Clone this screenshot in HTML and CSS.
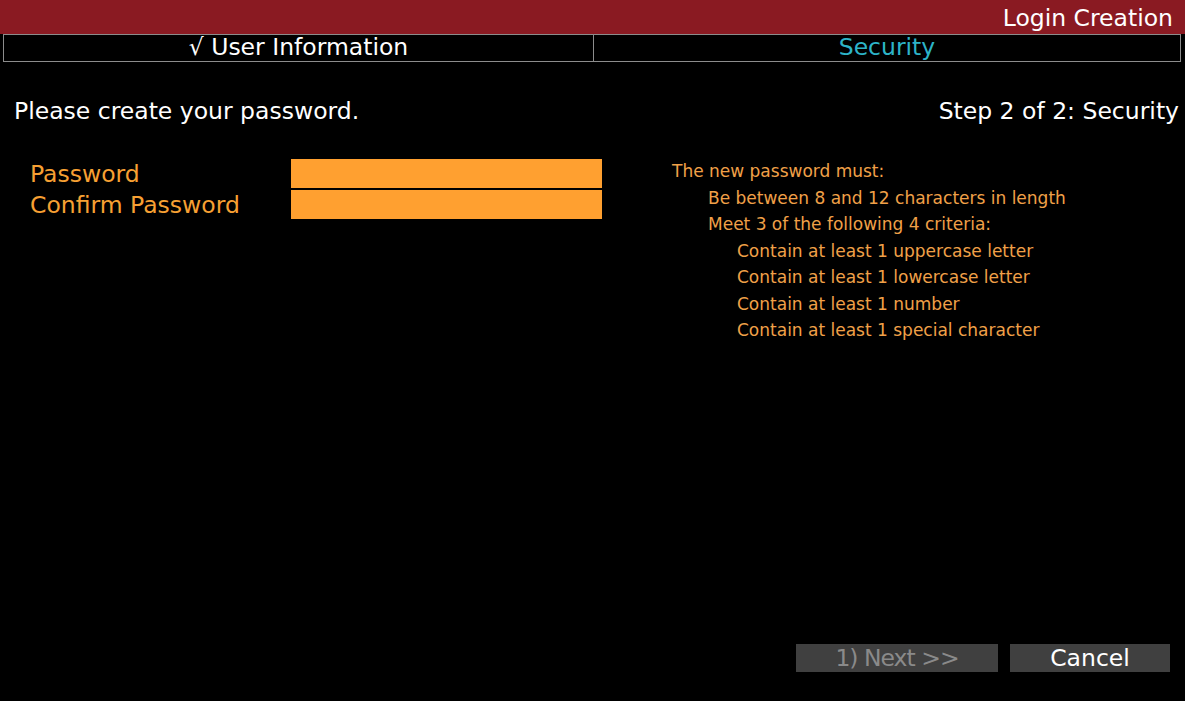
FILE: index.html
```html
<!DOCTYPE html>
<html>
<head>
<meta charset="utf-8">
<link rel="stylesheet" href="styles.css">
</head>
<body>
<div class="titlebar"><span class="title">Login Creation</span></div>
<div class="tabs">
  <div class="tab done">√ User Information</div>
  <div class="tab active">Security</div>
</div>
<div class="headline">
  <div class="prompt">Please create your password.</div>
  <div class="step">Step 2 of 2: Security</div>
</div>
<div class="content">
  <div class="form">
    <div class="row">
      <label class="label">Password</label>
      <div class="field"></div>
    </div>
    <div class="row">
      <label class="label">Confirm Password</label>
      <div class="field"></div>
    </div>
  </div>
  <div class="rules">
    <div class="rule l0">The new password must:</div>
    <div class="rule l1">Be between 8 and 12 characters in length</div>
    <div class="rule l1">Meet 3 of the following 4 criteria:</div>
    <div class="rule l2">Contain at least 1 uppercase letter</div>
    <div class="rule l2">Contain at least 1 lowercase letter</div>
    <div class="rule l2">Contain at least 1 number</div>
    <div class="rule l2">Contain at least 1 special character</div>
  </div>
</div>
<div class="actions">
  <button class="btn disabled">1) Next &gt;&gt;</button>
  <button class="btn cancel">Cancel</button>
</div>
</body>
</html>
```
FILE: styles.css
```css
html, body {
  margin: 0;
  padding: 0;
  background: #000;
  width: 1185px;
  height: 701px;
  overflow: hidden;
  font-family: "DejaVu Sans", "Noto Sans", sans-serif;
  color: #fff;
}
.titlebar {
  height: 34px;
  box-sizing: border-box;
  padding: 3px 12px 0 0;
  background: #8a1a22;
  display: flex;
  justify-content: flex-end;
  align-items: center;
}
.title {
  font-size: 23.5px;
  line-height: 31px;
  color: #fff;
}
.tabs {
  display: grid;
  grid-template-columns: 590px 1fr;
  margin: 0 4px 0 3px;
  height: 26px;
  border: 1px solid #8c8c8c;
}
.tab {
  font-size: 23.5px;
  line-height: 24px;
  text-align: center;
}
.tab.done {
  border-right: 1px solid #8c8c8c;
  color: #fff;
}
.tab.active {
  color: #2db4c8;
}
.headline {
  display: flex;
  justify-content: space-between;
  margin-top: 34px;
  padding: 0 6px 0 14px;
  font-size: 23.5px;
  line-height: 30px;
}
.content {
  display: flex;
  margin-top: 33px;
  padding-left: 30px;
}
.form {
  display: flex;
  flex-direction: column;
  gap: 2px;
  width: 572px;
}
.row {
  display: flex;
  align-items: center;
  height: 29px;
}
.label {
  width: 261px;
  font-size: 23.5px;
  line-height: 29px;
  padding-top: 2px;
  color: #f7a033;
}
.field {
  width: 311px;
  height: 29px;
  background: #ffa030;
}
.rules {
  margin-left: 70px;
  margin-top: -1px;
  font-size: 17px;
  line-height: 26.5px;
  color: #f0a048;
}
.l1 { padding-left: 36px; }
.l2 { padding-left: 65px; }
.actions {
  position: absolute;
  top: 644px;
  left: 796px;
  display: flex;
  gap: 12px;
}
.btn {
  height: 28px;
  border: none;
  background: #404040;
  font-family: "DejaVu Sans", "Noto Sans", sans-serif;
  font-size: 23.5px;
  line-height: 28px;
  padding: 0;
}
.btn.disabled {
  width: 202px;
  color: #8a8a8a;
  letter-spacing: -1px;
}
.btn.cancel {
  width: 160px;
  color: #fff;
}
```
